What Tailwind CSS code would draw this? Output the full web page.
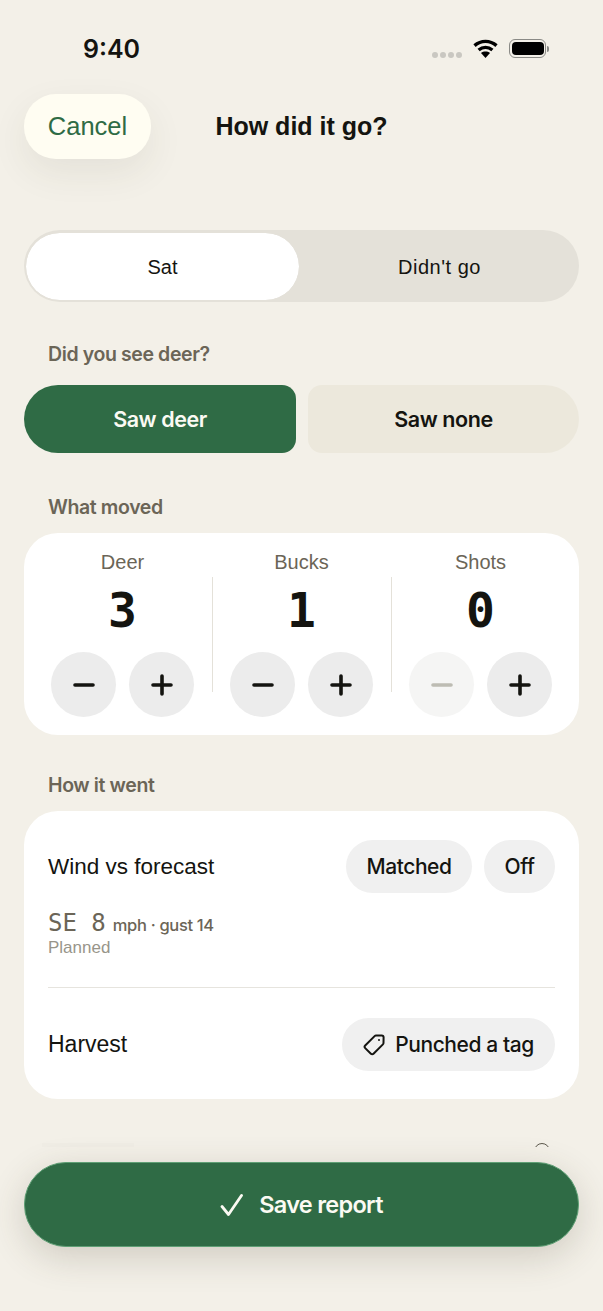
<!DOCTYPE html>
<html lang="en">
<head>
  <meta charset="UTF-8">
  <meta name="viewport" content="width=device-width, initial-scale=1">
  <title>How did it go?</title>
  <script src="https://cdn.jsdelivr.net/npm/@tailwindcss/browser@4"></script>
</head>
<body class="bg-[#f3f0e8] font-['Liberation_Sans',sans-serif] text-[#141410]">
<div class="relative h-[1311px] w-[603px] overflow-hidden">

  <!-- status bar -->
  <div class="flex h-[94px] items-start justify-between pl-[83px] pr-[54px] pt-[33px]">
    <span class="font-['Inter',sans-serif] text-[25px] font-semibold leading-[32px]">9:40</span>
    <div class="flex items-center pt-[6px]">
      <div class="mt-[12px] flex gap-[2px]">
        <span class="size-[6px] rounded-full bg-[#c9c7c1]"></span>
        <span class="size-[6px] rounded-full bg-[#c9c7c1]"></span>
        <span class="size-[6px] rounded-full bg-[#c9c7c1]"></span>
        <span class="size-[6px] rounded-full bg-[#c9c7c1]"></span>
      </div>
      <svg class="ml-[11px] h-[19px] w-[25px]" viewBox="0 0 25 19" fill="none" stroke="#000" stroke-width="3.4">
        <path d="M1.5 6.6C8 1 17 1 23.5 6.6"/>
        <path d="M5.6 11C9.8 7.6 15.2 7.6 19.4 11"/>
        <path d="M8 14l4.5 5 4.500-5c-2.600-1.900-6.400-1.900-9 0z" fill="#000" stroke="none"/>
      </svg>
      <div class="ml-[11px] flex items-center">
        <div class="flex h-[19px] w-[37px] items-center justify-center rounded-[6px] border border-[#8a8a86]">
          <div class="h-[13px] w-[32px] rounded-[4px] bg-black"></div>
        </div>
        <div class="ml-[1px] h-[6px] w-[2px] rounded-r-full bg-[#8a8a86]"></div>
      </div>
    </div>
  </div>

  <!-- header -->
  <div class="relative mx-[24px] flex h-[65px] items-center">
    <button class="flex h-[65px] w-[127px] items-center justify-center rounded-[32px] bg-[#fffdf2] text-[25.5px] text-[#2f6b45] shadow-[0_14px_36px_rgba(70,60,40,0.08)]">Cancel</button>
    <h1 class="flex-1 pr-[127px] text-center text-[25px] font-bold">How did it go?</h1>
  </div>

  <!-- sat / didn't go -->
  <div class="mx-[24px] mt-[71px] flex h-[72px] rounded-[36px] bg-[#e4e1d9] px-[2px] pt-[3px]">
    <div class="flex h-[67px] w-[273px] items-center justify-center rounded-[34px] bg-white text-[20px] outline outline-[#e4e1d9]">Sat</div>
    <div class="flex h-[67px] flex-1 items-center justify-center pl-[3px] text-[20px] tracking-[0.025em]">Didn't go</div>
  </div>

  <p class="mx-[48px] mt-[40px] font-['Inter',sans-serif] text-[19.500px] font-semibold leading-[24px] tracking-[-0.02em] text-[#6b6557]">Did you see deer?</p>

  <div class="mx-[24px] mt-[19px] flex gap-[12px]">
    <button class="flex h-[68px] w-[272px] items-center justify-center rounded-l-[34px] rounded-r-[14px] bg-[#2f6b45] font-['Inter',sans-serif] text-[21.5px] font-semibold tracking-[-0.02em] text-[#fbfaf3]">Saw deer</button>
    <button class="flex h-[68px] flex-1 items-center justify-center rounded-l-[14px] rounded-r-[34px] bg-[#ece8dc] font-['Inter',sans-serif] text-[21.5px] font-semibold tracking-[-0.02em]">Saw none</button>
  </div>

  <p class="mx-[48px] mt-[42px] pt-px font-['Inter',sans-serif] text-[19.500px] font-semibold leading-[23px] tracking-[-0.02em] text-[#6b6557]">What moved</p>

  <!-- counters -->
  <div class="mx-[24px] mt-[14px] flex h-[202px] rounded-[34px] bg-white pl-[27px] pt-[17px]">
    <div class="w-[143px] shrink-0">
      <p class="text-center text-[20px] leading-[24px] text-[#6b6557]">Deer</p>
      <p class="mt-[9px] text-center font-['DejaVu_Sans_Mono',monospace] text-[48px] font-bold leading-[54px]">3</p>
      <div class="mt-[15px] flex gap-[13px]">
        <button class="flex size-[65px] shrink-0 items-center justify-center rounded-full bg-[#ececec]">
          <svg class="size-[24px]" viewBox="0 0 24 24" stroke="#141410" stroke-width="3.6" stroke-linecap="round"><path d="M3 12h18"/></svg>
        </button>
        <button class="flex size-[65px] shrink-0 items-center justify-center rounded-full bg-[#ececec]">
          <svg class="size-[24px]" viewBox="0 0 24 24" stroke="#141410" stroke-width="3.6" stroke-linecap="round"><path d="M3 12h18M12 3v18"/></svg>
        </button>
      </div>
    </div>
    <div class="ml-[18px] mt-[27px] h-[115px] w-[1px] shrink-0 bg-[#e4e1d9]"></div>
    <div class="ml-[17px] w-[143px] shrink-0">
      <p class="text-center text-[20px] leading-[24px] text-[#6b6557]">Bucks</p>
      <p class="mt-[9px] text-center font-['DejaVu_Sans_Mono',monospace] text-[48px] font-bold leading-[54px]">1</p>
      <div class="mt-[15px] flex gap-[13px]">
        <button class="flex size-[65px] shrink-0 items-center justify-center rounded-full bg-[#ececec]">
          <svg class="size-[24px]" viewBox="0 0 24 24" stroke="#141410" stroke-width="3.6" stroke-linecap="round"><path d="M3 12h18"/></svg>
        </button>
        <button class="flex size-[65px] shrink-0 items-center justify-center rounded-full bg-[#ececec]">
          <svg class="size-[24px]" viewBox="0 0 24 24" stroke="#141410" stroke-width="3.6" stroke-linecap="round"><path d="M3 12h18M12 3v18"/></svg>
        </button>
      </div>
    </div>
    <div class="ml-[18px] mt-[27px] h-[115px] w-[1px] shrink-0 bg-[#e4e1d9]"></div>
    <div class="ml-[17px] w-[143px] shrink-0">
      <p class="text-center text-[20px] leading-[24px] text-[#6b6557]">Shots</p>
      <p class="mt-[9px] text-center font-['DejaVu_Sans_Mono',monospace] text-[48px] font-bold leading-[54px]">0</p>
      <div class="mt-[15px] flex gap-[13px]">
        <button class="flex size-[65px] shrink-0 items-center justify-center rounded-full bg-[#f5f5f4]">
          <svg class="size-[24px]" viewBox="0 0 24 24" stroke="#bdbcb3" stroke-width="3.6" stroke-linecap="round"><path d="M3 12h18"/></svg>
        </button>
        <button class="flex size-[65px] shrink-0 items-center justify-center rounded-full bg-[#ececec]">
          <svg class="size-[24px]" viewBox="0 0 24 24" stroke="#141410" stroke-width="3.6" stroke-linecap="round"><path d="M3 12h18M12 3v18"/></svg>
        </button>
      </div>
    </div>
  </div>

  <p class="mx-[48px] mt-[38px] pt-px font-['Inter',sans-serif] text-[19.500px] font-semibold leading-[23px] tracking-[-0.02em] text-[#6b6557]">How it went</p>

  <!-- how it went -->
  <div class="mx-[24px] mt-[14px] h-[288px] rounded-[34px] bg-white px-[24px] pt-[29px]">
    <div class="flex h-[53px] items-center">
      <span class="flex-1 text-[22.5px]">Wind vs forecast</span>
      <span class="flex h-[53px] w-[126px] items-center justify-center rounded-[27px] bg-[#f0f0f0] font-['Inter',sans-serif] text-[21px] font-medium tracking-[-0.02em]">Matched</span>
      <span class="ml-[12px] flex h-[53px] w-[71px] items-center justify-center rounded-[27px] bg-[#f0f0f0] font-['Inter',sans-serif] text-[21px] font-medium tracking-[-0.02em]">Off</span>
    </div>
    <p class="mt-[15px] flex items-baseline leading-[30px] text-[#6b6557]">
      <span class="font-['DejaVu_Sans_Mono',monospace] text-[24px] whitespace-pre">SE 8</span>
      <span class="ml-[7px] font-['Inter',sans-serif] text-[16.500px] font-medium tracking-[-0.02em]">mph · gust 14</span>
    </p>
    <p class="-mt-[3px] text-[17px] leading-[22px] text-[#98958a]">Planned</p>
    <div class="mt-[28px] h-px bg-[#e6e4de]"></div>
    <div class="mt-[30px] flex h-[53px] items-center">
      <span class="flex-1 text-[23px]">Harvest</span>
      <span class="flex h-[53px] w-[213px] items-center justify-center gap-[10px] rounded-[27px] bg-[#f0f0f0] font-['Inter',sans-serif] text-[21px] font-medium tracking-[-0.02em]">
        <svg class="size-[22px]" viewBox="0 0 22 22" fill="none" stroke="#141410" stroke-width="2" stroke-linejoin="round">
          <path d="M13 1.500l5.700-.1c1 0 1.900.8 1.900 1.900l-.1 5.700c0 .5-.2 1-.6 1.400L10.500 19.800c-.7.7-1.900.7-2.600 0L2.200 14.100c-.7-.7-.7-1.900 0-2.600L11.600 2.100c.4-.4.900-.6 1.400-.6z"/>
          <circle cx="16" cy="6" r="1" fill="#141410" stroke="none"/>
        </svg>
        Punched a tag
      </span>
    </div>
  </div>

  <!-- next section, mostly under the save bar -->
  <div class="mx-[24px] mt-[44px] flex h-[24px] items-start justify-between pl-[18px] pr-[29px]">
    <span class="h-[8px] w-[92px] bg-[#f0ede5]"></span>
    <span class="size-[16px] rounded-full border-[1.5px] border-[#5c584c]"></span>
  </div>

  <!-- save bar -->
  <div class="absolute inset-x-0 bottom-0 h-[164px] bg-[#f3f0e8] px-[24px] pt-[15px]">
    <button class="flex h-[85px] w-full items-center justify-center gap-[15px] rounded-[42px] border border-[#5f9f75] bg-[#2f6b45] font-['Inter',sans-serif] text-[23.5px] font-semibold tracking-[-0.03em] text-[#fbfaf3] shadow-[0_10px_36px_rgba(70,60,40,0.20)]">
      <svg class="h-[22px] w-[24px]" viewBox="0 0 24 22" fill="none" stroke="#fbfaf3" stroke-width="2.800" stroke-linecap="round" stroke-linejoin="round"><path d="M2 12.500l6.500 8L21.500 1.500"/></svg>
      Save report
    </button>
  </div>
</div>
</body>
</html>
